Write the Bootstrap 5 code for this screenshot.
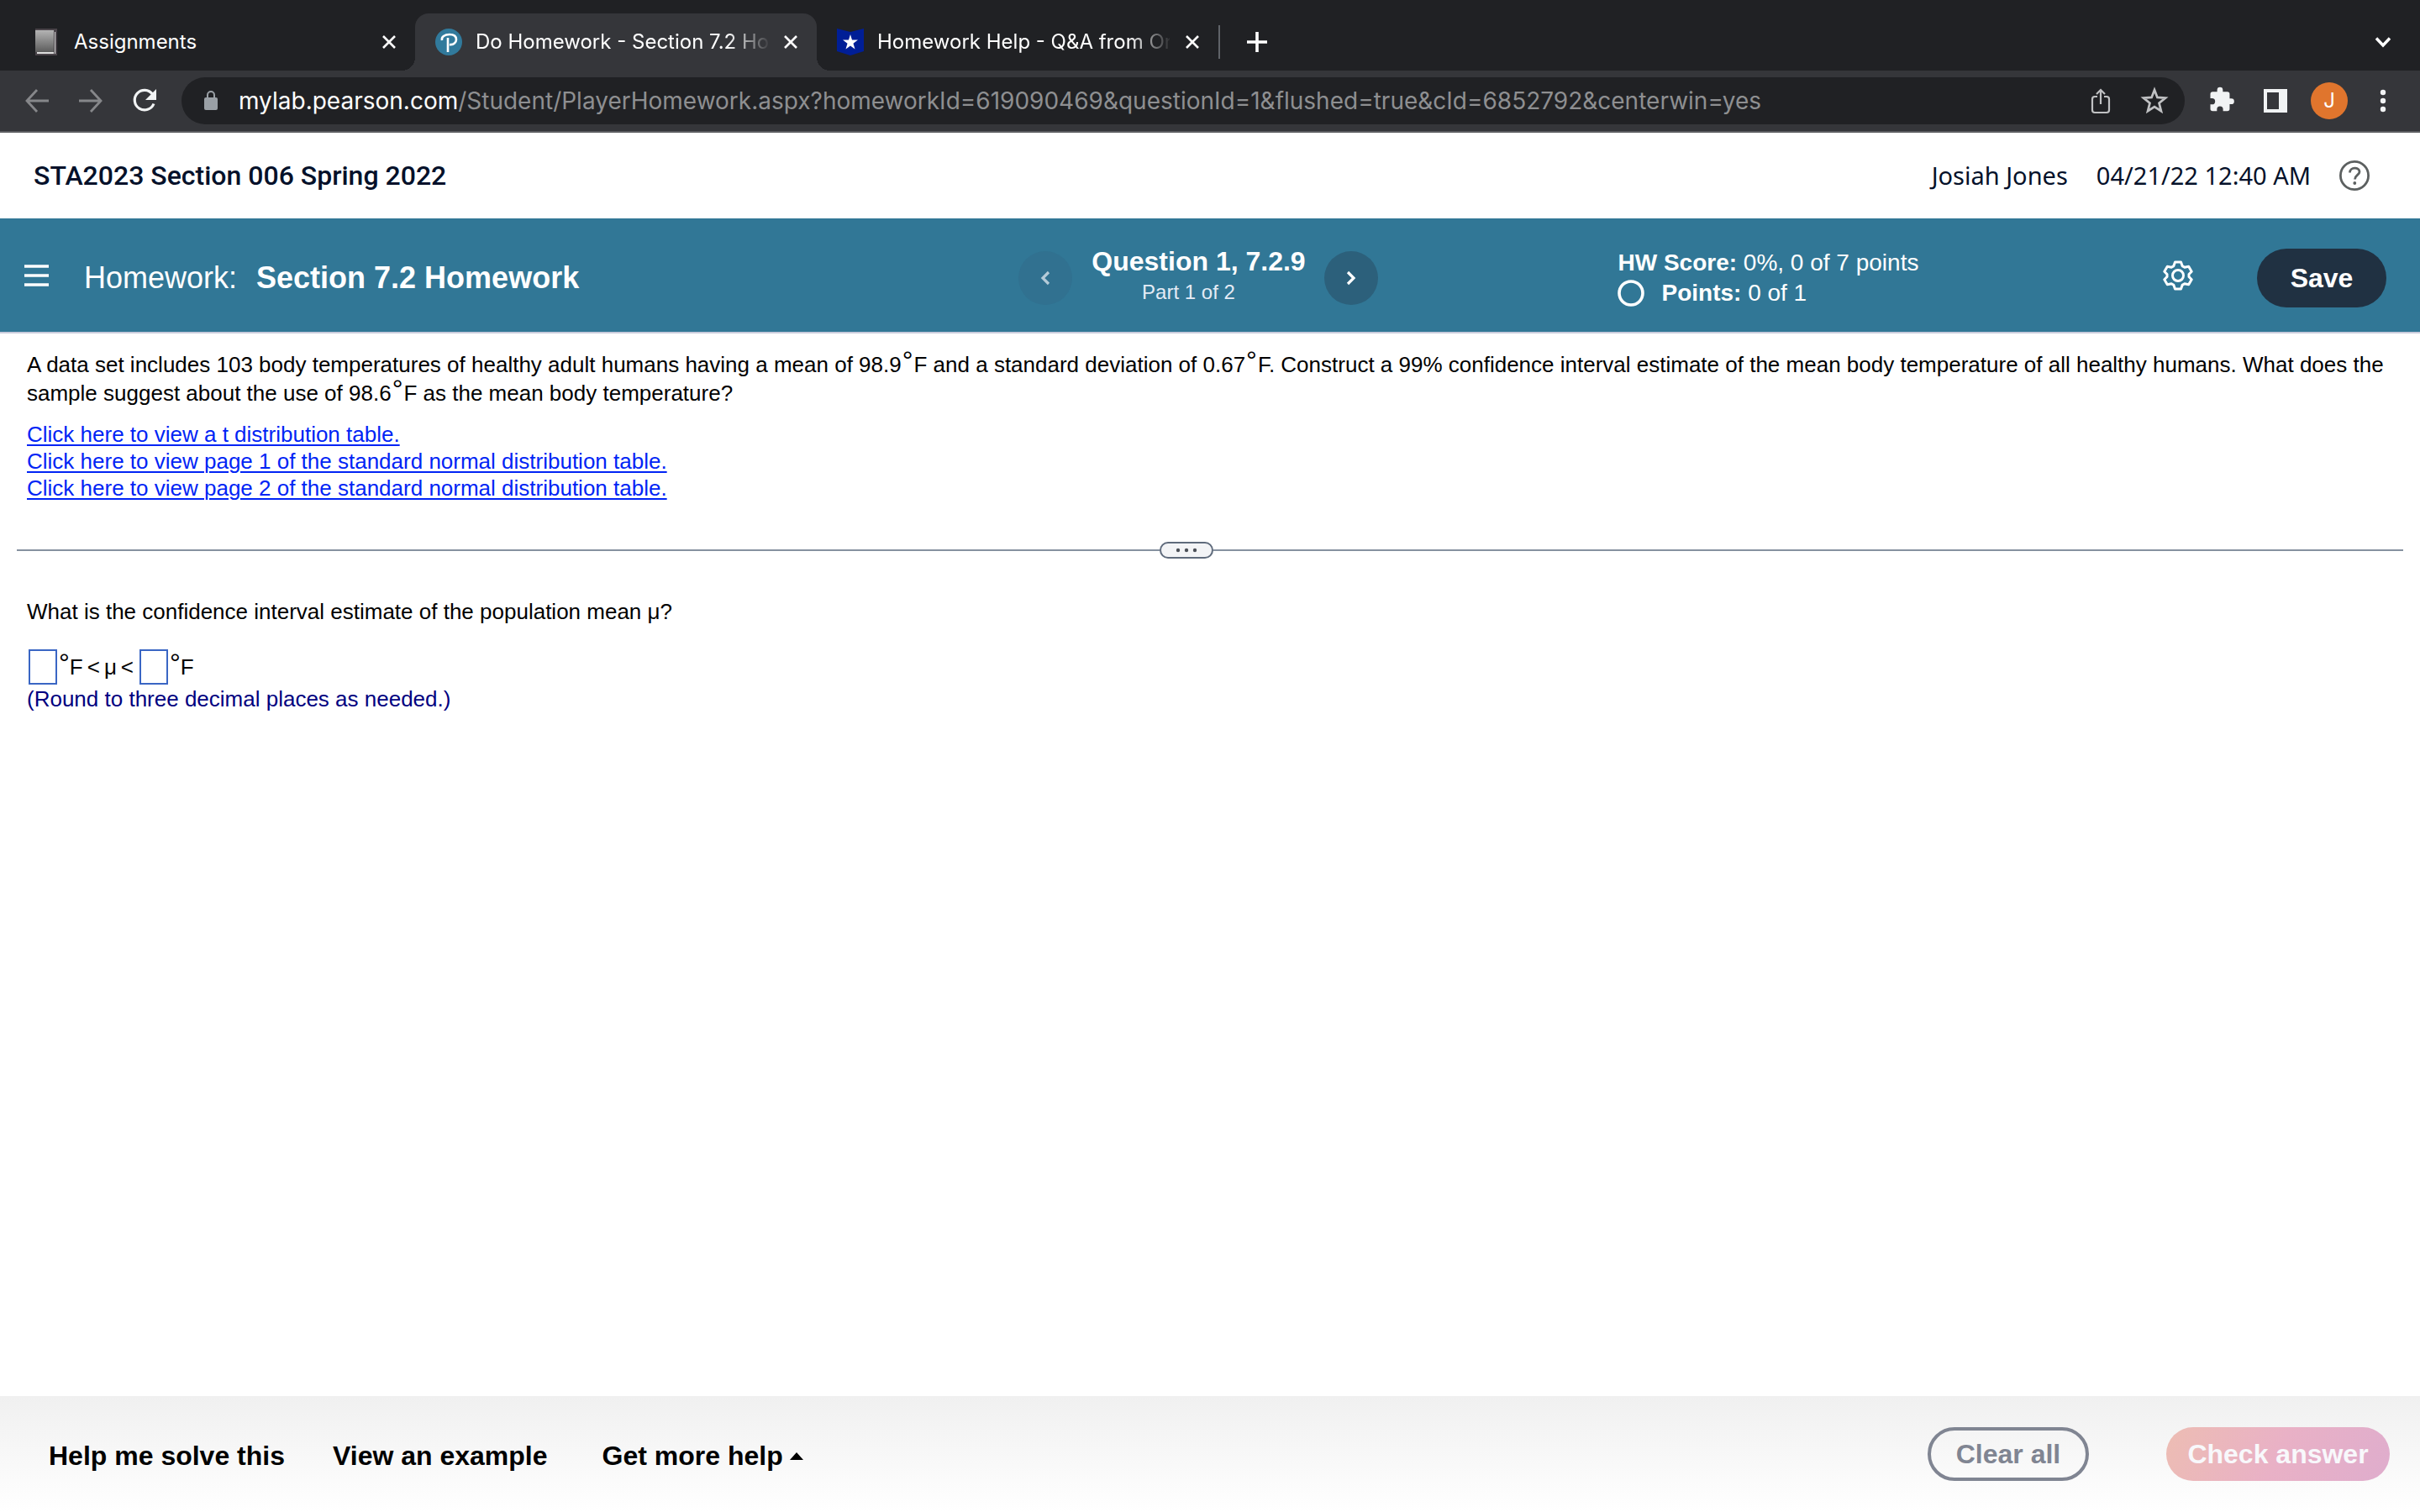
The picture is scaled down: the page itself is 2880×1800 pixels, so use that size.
<!DOCTYPE html>
<html lang="en">
<head>
<meta charset="utf-8">
<meta name="viewport" content="width=device-width, initial-scale=1">
<title>Do Homework - Section 7.2 Homework</title>
<link href="https://cdn.jsdelivr.net/npm/bootstrap@5.3.0/dist/css/bootstrap.min.css" rel="stylesheet">
<style>
body { font-family: "Liberation Sans", Arial, sans-serif; font-size: 26px; line-height: 34px; color: #000; background: #fff; }
svg { display: block; flex: none; }
button { flex: none; }
.plain-btn { background: none; border: 0; padding: 0; color: inherit; font: inherit; line-height: 1; display: flex; align-items: center; justify-content: center; }

/* browser chrome */
.chrome-ui { font-family: Inter, Roboto, sans-serif; color: #fff; }
.tab-strip { background: #202124; height: 84px; padding: 16px 20px 0 16px; }
.tab-item { width: 478px; height: 68px; padding: 0 20px 0 24px; gap: 16px; font-size: 24px; position: relative; }
.tab-item.is-current { background: #35363a; border-radius: 16px 16px 0 0; }
.tab-item.is-current::before, .tab-item.is-current::after { content: ""; position: absolute; bottom: 0; width: 16px; height: 16px; }
.tab-item.is-current::before { left: -16px; background: radial-gradient(circle at 0 0, transparent 16px, #35363a 16px); }
.tab-item.is-current::after { right: -16px; background: radial-gradient(circle at 100% 0, transparent 16px, #35363a 16px); }
.tab-label { flex: 1 1 0; min-width: 0; overflow: hidden; white-space: nowrap; color: #fff; text-decoration: none; }
.fade-end { -webkit-mask-image: linear-gradient(90deg, #000 86%, transparent 101%); mask-image: linear-gradient(90deg, #000 86%, transparent 101%); }
.tab-rule { width: 2px; height: 40px; background: #5f6368; }
.tool-row { background: #35363a; height: 74px; border-bottom: 2px solid #5c5d60; padding: 0 26px; gap: 26px; }
.tool-group { gap: 28px; }
.tool-group .plain-btn { width: 36px; height: 44px; }
.omnibox { background: #202124; border-radius: 28px; height: 56px; padding: 0 18px 0 26px; gap: 24px; font-size: 28px; }
.tool-group .plain-btn.profile-dot { width: 44px; margin: 0 -4px; background: #e0752d; border-radius: 50%; font-size: 24px; }
.url-rest { color: #8e8f91; }

/* course header */
.course-bar { height: 102px; padding: 0 60px 0 40px; color: #05112a; }
.course-name { font-family: Roboto, sans-serif; font-weight: 500; font-size: 32px; }
.course-meta { font-family: "Noto Sans", sans-serif; font-size: 29px; gap: 34px; }

/* assignment bar */
.work-bar { background: #317796; height: 137px; padding-top: 6px; border-bottom: 2px solid #c9ccdc; color: #fff; }
.work-left { flex: 0 0 42.1%; padding-left: 28px; gap: 41px; font-size: 36px; }
.work-left b { margin-left: 3px; }
.raised-icon { padding-bottom: 6px; }
.step-btn { width: 64px; height: 64px; border-radius: 50%; background: #2c607b; color: #fff; border: 0; padding: 0; display: flex; align-items: center; justify-content: center; }
.step-btn:disabled { background: #317190; color: #b5cbd8; }
.step-text { width: 300px; padding-bottom: 6px; }
.step-title { font-size: 32px; font-weight: 700; line-height: 40px; }
.step-part { font-size: 24px; color: #e4ebf5; padding-right: 24px; }
.score-box { margin-left: 285px; font-size: 28px; line-height: 36px; }
.work-right { gap: 76px; padding-right: 40px; }
.save-btn { width: 154px; height: 70px; border-radius: 35px; border: 0; background: #203142; color: #fff; font-size: 32px; font-weight: 700; }

/* problem */
.problem { padding: 20px 32px 0; }
.problem a { color: #0024f5; text-decoration: underline; text-decoration-thickness: 2px; text-underline-offset: 3px; line-height: 32px; }
.deg { font-size: 32px; line-height: 0; position: relative; top: -3px; }
.problem .deg { margin: 0 1px; }
.split-row { margin: 48px 20px 0; }
.split-line { height: 2px; background: #8691a0; flex: 49 1 0; }
.split-line.is-end { flex-grow: 51; }
.split-grip { width: 64px; height: 20px; border: 2px solid #5f6b7c; border-radius: 10px; background: #f3f4f6; padding: 0; display: flex; align-items: center; justify-content: center; }
.answer { padding: 46px 32px 0; }
.answer-line { gap: 2px; margin-top: 28px; padding-left: 2px; }
.relation { gap: 5px; padding-right: 5px; }
.answer-box { width: 34px; height: 42px; border: 2px solid #3a66c4; border-radius: 0; padding: 0; font-size: 24px; text-align: center; }
.hint { color: #00007f; }

/* footer */
.help-bar { height: 138px; background: linear-gradient(#f0f0f0, #fff); padding: 0 36px 0 58px; font-size: 32px; font-weight: 700; }
.help-links { gap: 57px; padding-top: 3px; }
.help-bar a { color: #000; text-decoration: none; }
.act-row { gap: 92px; }
.act-btn { height: 64px; border-radius: 32px; font-size: 32px; font-weight: 700; }
.clear-btn { width: 192px; border: 4px solid #808592; background: transparent; color: #808592; }
.check-btn { width: 266px; border: 0; color: #f8f8fb; background: linear-gradient(115deg, #edbdb3, #e9b1c6 50%, #dfadcd); }
</style>
</head>
<body class="d-flex flex-column min-vh-100">
<div class="chrome-ui">
  <div class="tab-strip d-flex align-items-center">
    <div class="tab-item d-flex align-items-center">
      <svg width="32" height="32" viewBox="0 0 32 32"><defs><linearGradient id="bk" x1="0" y1="0" x2="0" y2="1"><stop offset="0" stop-color="#b4b4b4"/><stop offset="1" stop-color="#5c5c5c"/></linearGradient></defs><path d="M2 0h26v32H2z" fill="#4a444a"/><path d="M2 2h22v26H2z" fill="url(#bk)"/><path d="M4 28h20v2H4zM25 4h1v26h-1z" fill="#ddd"/></svg>
      <a class="tab-label" href="#">Assignments</a>
      <button class="plain-btn" aria-label="Close tab"><svg width="22" height="22" viewBox="0 0 22 22"><path d="M4 4l14 14M18 4L4 18" stroke="#fff" stroke-width="2.600"/></svg></button>
    </div>
    <div class="tab-item is-current d-flex align-items-center">
      <svg width="32" height="32" viewBox="0 0 32 32"><circle cx="16" cy="16" r="16" fill="#317a9c"/><path d="M15 28V11M8 14c-1-4 3-7 9-7s8 3 8 6-3 7-8 6" fill="none" stroke="#fff" stroke-width="2.600"/></svg>
      <a class="tab-label fade-end" href="#">Do Homework - Section 7.2 Homework</a>
      <button class="plain-btn" aria-label="Close tab"><svg width="22" height="22" viewBox="0 0 22 22"><path d="M4 4l14 14M18 4L4 18" stroke="#fff" stroke-width="2.600"/></svg></button>
    </div>
    <div class="tab-item d-flex align-items-center">
      <svg width="32" height="32" viewBox="0 0 32 32"><path d="M0 0l16 4 16-4v27l-16 5-16-5z" fill="#001e96"/><path d="M16 7l2 6.500h7l-5.500 4.200 2 6.800-5.500-4-5.500 4 2-6.800L7 13.500h7z" fill="#fff"/></svg>
      <a class="tab-label fade-end" href="#">Homework Help - Q&amp;A from Online Tutors</a>
      <button class="plain-btn" aria-label="Close tab"><svg width="22" height="22" viewBox="0 0 22 22"><path d="M4 4l14 14M18 4L4 18" stroke="#fff" stroke-width="2.600"/></svg></button>
    </div>
    <div class="tab-rule"></div>
    <button class="plain-btn ms-4 p-1" aria-label="New tab"><svg width="32" height="32" viewBox="0 0 32 32"><path d="M16 4v24M4 16h24" stroke="#fff" stroke-width="3.600"/></svg></button>
    <button class="plain-btn ms-auto p-1" aria-label="Search tabs"><svg width="40" height="40" viewBox="0 0 40 40"><path d="M12 15.500l8 8.500 8-8.500" fill="none" stroke="#fff" stroke-width="3.400"/></svg></button>
  </div>
  <div class="tool-row d-flex align-items-center">
    <div class="tool-group d-flex">
      <button class="plain-btn" aria-label="Back"><svg width="30" height="30" viewBox="0 0 30 30"><path d="M29 15H4M15 2L3 15l12 13" fill="none" stroke="#86878a" stroke-width="2.800"/></svg></button>
      <button class="plain-btn" aria-label="Forward"><svg width="30" height="30" viewBox="0 0 30 30"><path d="M1 15h25M15 2l12 13-12 13" fill="none" stroke="#86878a" stroke-width="2.800"/></svg></button>
      <button class="plain-btn" aria-label="Reload"><svg width="30" height="30" viewBox="0 0 30 30"><path d="M26 18.500A11.800 11.800 0 1 1 24.500 7" fill="none" stroke="#f1f3f4" stroke-width="3.200"/><path d="M29 1v13H16z" fill="#f1f3f4"/></svg></button>
    </div>
    <div class="omnibox d-flex align-items-center flex-grow-1">
      <svg width="18" height="24" viewBox="0 0 18 24"><rect x="1" y="8" width="16" height="15" rx="2" fill="#9aa0a6"/><path d="M5 9V5a4 4 0 0 1 8 0v4" fill="none" stroke="#9aa0a6" stroke-width="2"/></svg>
      <div class="flex-grow-1 text-nowrap">mylab.pearson.com<span class="url-rest">/Student/PlayerHomework.aspx?homeworkId=619090469&amp;questionId=1&amp;flushed=true&amp;cId=6852792&amp;centerwin=yes</span></div>
      <div class="tool-group d-flex">
        <button class="plain-btn" aria-label="Share"><svg width="24" height="32" viewBox="0 0 24 32"><path d="M8 11H5a3 3 0 0 0-3 3v13a3 3 0 0 0 3 3h14a3 3 0 0 0 3-3V14a3 3 0 0 0-3-3h-3M12 20V3M7 8l5-5 5 5" fill="none" stroke="#c0c1c3" stroke-width="2.200"/></svg></button>
        <button class="plain-btn" aria-label="Bookmark"><svg width="34" height="34" viewBox="0 0 30 30"><path d="M15 3.500l3 7.900 8.500.6-6.600 5.400 2.100 8.300L15 21.200l-7 4.500 2.100-8.300L3.500 12l8.500-.6z" fill="none" stroke="#c0c1c3" stroke-width="2.400"/></svg></button>
      </div>
    </div>
    <div class="tool-group d-flex align-items-center">
      <button class="plain-btn" aria-label="Extensions"><svg width="36" height="36" viewBox="0 0 24 24"><path d="M20.500 11H19V7a2 2 0 0 0-2-2h-4V3.500a2.500 2.500 0 0 0-5 0V5H4a2 2 0 0 0-2 2v3.800h1.500a2.700 2.700 0 0 1 0 5.400H2V20a2 2 0 0 0 2 2h3.800v-1.500a2.700 2.700 0 0 1 5.400 0V22H17a2 2 0 0 0 2-2v-4h1.500a2.500 2.500 0 0 0 0-5z" fill="#f1f3f4" transform="translate(1.200 .3) scale(.9)"/></svg></button>
      <button class="plain-btn" aria-label="Side panel"><svg width="28" height="28" viewBox="0 0 28 28"><path fill-rule="evenodd" d="M0 0h28v28H0zM4 4v20h14V4z" fill="#f1f3f4"/></svg></button>
      <button class="plain-btn profile-dot" aria-label="Profile">J</button>
      <button class="plain-btn" aria-label="Menu"><svg width="8" height="28" viewBox="0 0 8 28"><g fill="#f1f3f4"><circle cx="4" cy="4" r="3.200"/><circle cx="4" cy="14" r="3.200"/><circle cx="4" cy="24" r="3.200"/></g></svg></button>
    </div>
  </div>
</div>

<header class="course-bar d-flex align-items-center justify-content-between">
  <div class="course-name">STA2023 Section 006 Spring 2022</div>
  <div class="course-meta d-flex align-items-center">
    <span>Josiah Jones</span><span>04/21/22 12:40 AM</span>
    <button class="plain-btn" aria-label="Help"><svg width="36" height="36" viewBox="0 0 36 36"><circle cx="18" cy="18" r="16.600" fill="none" stroke="#5c6060" stroke-width="2.800"/><path d="M12.500 14.500c0-7 11.500-7 11.500-1 0 4-5.500 4-5.500 9" fill="none" stroke="#5c6060" stroke-width="2.800"/><circle cx="18.300" cy="27" r="1.900" fill="#5c6060"/></svg></button>
  </div>
</header>

<nav class="work-bar d-flex align-items-center" aria-label="Assignment">
  <div class="work-left d-flex align-items-center">
    <button class="plain-btn raised-icon" aria-label="Menu"><svg width="31" height="28" viewBox="0 0 31 28"><path d="M1 3h29M1 14h29M1 25h29" stroke="#fff" stroke-width="3.600"/></svg></button>
    <div class="text-nowrap">Homework:&nbsp; <b>Section 7.2 Homework</b></div>
  </div>
  <div class="d-flex align-items-center">
    <button class="step-btn" disabled aria-label="Previous question"><svg width="14" height="20" viewBox="0 0 14 20"><path d="M11 3l-7 7 7 7" fill="none" stroke="currentColor" stroke-width="3.200"/></svg></button>
    <div class="step-text text-center">
      <div class="step-title">Question 1, 7.2.9</div>
      <div class="step-part">Part 1 of 2</div>
    </div>
    <button class="step-btn" aria-label="Next question"><svg width="14" height="20" viewBox="0 0 14 20"><path d="M3 3l7 7-7 7" fill="none" stroke="currentColor" stroke-width="3.200"/></svg></button>
  </div>
  <div class="score-box">
    <div><b>HW Score:</b> 0%, 0 of 7 points</div>
    <div class="d-flex align-items-center"><svg class="me-3" width="32" height="32" viewBox="0 0 32 32"><circle cx="16" cy="16" r="14" fill="none" stroke="#fff" stroke-width="3.600"/></svg><span class="ms-1"><b>Points:</b> 0 of 1</span></div>
  </div>
  <div class="work-right d-flex align-items-center ms-auto">
    <button class="plain-btn raised-icon" aria-label="Settings"><svg width="36" height="36" viewBox="0 0 36 36"><path d="M14.500 2h7l1.600 4.600 2.700 1.600 4.900-1 3.500 6-3.200 3.300v3l3.200 3.300-3.500 6-4.900-1-2.700 1.600L21.500 34h-7l-1.600-4.600-2.700-1.600-4.900 1-3.500-6L5 19.500v-3l-3.200-3.300 3.500-6 4.900 1 2.700-1.600z" fill="none" stroke="#fff" stroke-width="3" stroke-linejoin="round"/><circle cx="18" cy="18" r="6.500" fill="none" stroke="#fff" stroke-width="3"/></svg></button>
    <button class="save-btn">Save</button>
  </div>
</nav>

<main class="flex-grow-1">
  <section class="problem">
    <p class="mb-3">A data set includes 103 body temperatures of healthy adult humans having a mean of 98.9<span class="deg">°</span>F and a standard deviation of 0.67<span class="deg">°</span>F. Construct a 99% confidence interval estimate of the mean body temperature of all healthy humans. What does the sample suggest about the use of 98.6<span class="deg">°</span>F as the mean body temperature?</p>
    <div class="d-flex flex-column align-items-start">
      <a href="#">Click here to view a t distribution table.</a>
      <a href="#">Click here to view page 1 of the standard normal distribution table.</a>
      <a href="#">Click here to view page 2 of the standard normal distribution table.</a>
    </div>
  </section>
  <div class="split-row d-flex align-items-center">
    <div class="split-line"></div>
    <button class="split-grip" aria-label="Resize panes"><svg width="26" height="6" viewBox="0 0 26 6"><g fill="#4c5058"><circle cx="3" cy="3" r="2.200"/><circle cx="13" cy="3" r="2.200"/><circle cx="23" cy="3" r="2.200"/></g></svg></button>
    <div class="split-line is-end"></div>
  </div>
  <section class="answer">
    <div>What is the confidence interval estimate of the population mean μ?</div>
    <div class="answer-line d-flex align-items-center">
      <input class="answer-box" type="text" aria-label="Lower limit in degrees Fahrenheit">
      <div class="relation d-flex"><span><span class="deg">°</span>F</span><span>&lt;</span><span>μ</span><span>&lt;</span></div>
      <input class="answer-box" type="text" aria-label="Upper limit in degrees Fahrenheit">
      <span><span class="deg">°</span>F</span>
    </div>
    <div class="hint">(Round to three decimal places as needed.)</div>
  </section>
</main>

<footer class="help-bar d-flex align-items-center justify-content-between">
  <div class="help-links d-flex align-items-center">
    <a href="#">Help me solve this</a>
    <a href="#">View an example</a>
    <a class="d-flex align-items-center gap-2 ms-2" href="#">Get more help <svg width="16" height="10" viewBox="0 0 16 10"><path d="M0 10L8 1l8 9z" fill="#000"/></svg></a>
  </div>
  <div class="act-row d-flex">
    <button class="act-btn clear-btn">Clear all</button>
    <button class="act-btn check-btn">Check answer</button>
  </div>
</footer>
<script src="https://cdn.jsdelivr.net/npm/bootstrap@5.3.0/dist/js/bootstrap.bundle.min.js"></script>
</body>
</html>
